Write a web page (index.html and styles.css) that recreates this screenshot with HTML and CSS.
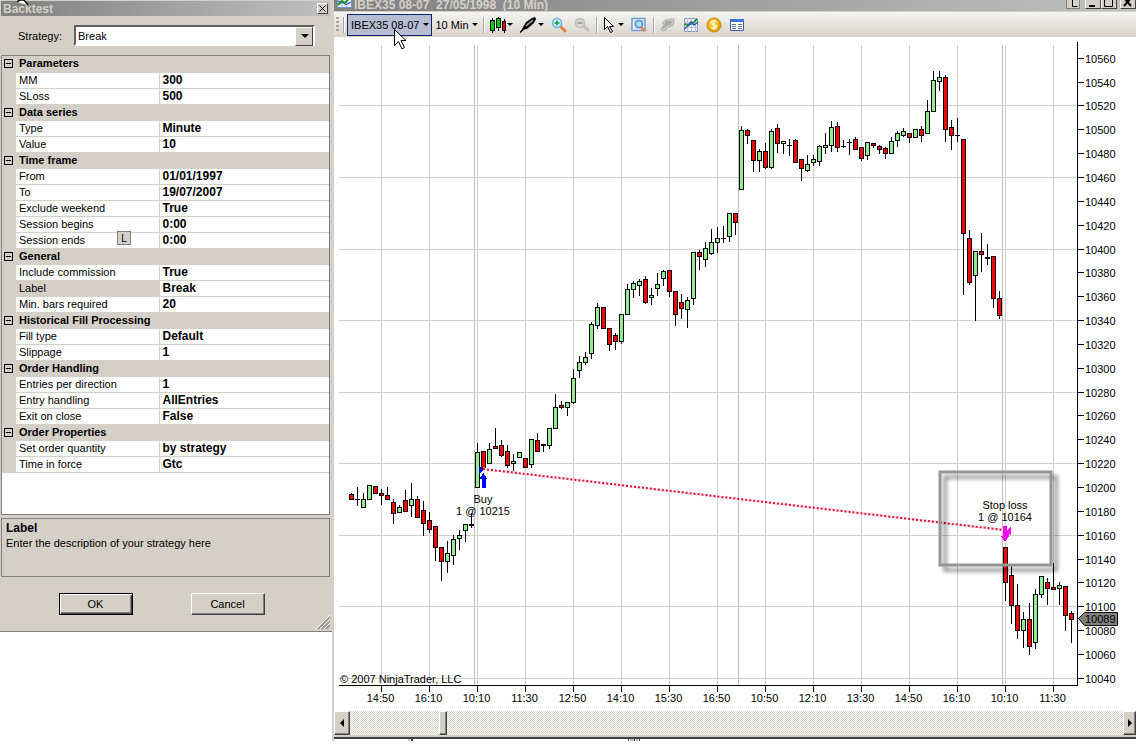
FILE: index.html
```html
<!DOCTYPE html>
<html lang="en">
<head>
    <meta charset="UTF-8">
    <meta name="viewport" content="width=device-width, initial-scale=1.0">
    <title>Backtest - IBEX35 08-07</title>
    <link rel="stylesheet" href="styles.css">
</head>
<body>
    <div class="desktop">
        <form class="dialog" onsubmit="event.preventDefault();">
            <div class="dialog-title">
                <span>Backtest</span>
                <button type="button" class="close-button" aria-label="Close">
                    <svg width="7" height="7" viewBox="0 0 7 7"><path d="M0.5 0.5L6.5 6.5M6.5 0.5L0.5 6.5" stroke="#000"/></svg>
                </button>
            </div>
            <div class="strategy">
                <label for="strategy">Strategy:</label>
                <div class="select-box">
                    <select id="strategy"><option>Break</option></select>
                </div>
            </div>
            <div class="property-grid">
                <table id="properties">
                    <colgroup><col class="col-toggle"><col class="col-name"><col></colgroup>
                    <tbody></tbody>
                </table>
                <button type="button" class="l-badge">L</button>
            </div>
            <div class="help">
                <h2>Label</h2>
                <p>Enter the description of your strategy here</p>
            </div>
            <div class="dialog-buttons">
                <button type="submit" class="button default">OK</button>
                <button type="button" class="button">Cancel</button>
            </div>
            <svg class="resize-grip" width="14" height="14" viewBox="0 0 14 14"><path d="M0 14L14 0M4 14L14 4M8 14L14 8" stroke="#fff"/><path d="M1.5 14L14 1.5M2.5 14L14 2.5M5.5 14L14 5.5M6.5 14L14 6.5M9.5 14L14 9.5M10.5 14L14 10.5" stroke="#808080"/></svg>
        </form>

        <main class="chart-window">
            <div class="window-title">
                <svg class="title-icon" width="15" height="14" viewBox="0 0 15 14"><path d="M0.5 0.5h14v13h-14z" fill="#e8eefa" stroke="#7a94cc"/><path d="M1 5h13M1 9h13M5 1v12M10 1v12" stroke="#a9b8dd"/><path d="M1 11l4-4 3 2 6-7" fill="none" stroke="#1c9a1c" stroke-width="2"/><path d="M1 7l4 1 4 3 5-3" fill="none" stroke="#2648b8"/></svg>
                <span class="window-name">IBEX35 08-07&nbsp; 27/05/1998&nbsp; (10 Min)</span>
                <button type="button" class="link-button" aria-label="Link"><svg width="14" height="14"><path d="M5.5 2v8.500h5" fill="none" stroke="#000" stroke-width="1"/></svg></button>
                <button type="button" class="window-button" aria-label="Minimize"><svg width="14" height="14"><path d="M3 9h6v2h-6z"/></svg></button>
                <button type="button" class="window-button joined" aria-label="Maximize"><svg width="14" height="14"><path d="M2.500 3v7.500h8v-7.500" fill="none" stroke="#000"/></svg></button>
                <button type="button" class="window-button" aria-label="Close"><svg width="14" height="14"><path d="M3 2l7 8M10 2l-7 8" stroke="#000" stroke-width="2"/></svg></button>
            </div>

            <div class="toolbar">
                <span class="grip"></span>
                <span class="separator"></span>
                <button type="button" class="tool text active">IBEX35 08-07<span class="arrow"></span></button>
                <button type="button" class="tool text">10 Min<span class="arrow"></span></button>
                <span class="separator"></span>
                <button type="button" class="tool" aria-label="Chart style">
                    <svg width="16" height="16" viewBox="0 0 16 16" shape-rendering="crispEdges"><path d="M2 1h1v15h-1zM8 0h1v14h-1zM14 2h1v14h-1z"/><g stroke="#000"><path d="M0.500 3.500h4v10h-4z" fill="#00d000"/><path d="M6.500 1.500h4v9h-4z" fill="#00d000"/><path d="M12.500 4.500h3v9h-3z" fill="#f00000"/></g></svg>
                    <span class="arrow"></span>
                </button>
                <button type="button" class="tool" aria-label="Drawing tools">
                    <svg width="17" height="16" viewBox="0 0 17 16"><path d="M2 12L6 5l6-4 3-1 1 2-2 4-7 6-5 1z"/><path d="M6 9l7-6" stroke="#aaa" stroke-width="1.500"/><path d="M0 15.500l5-5" stroke="#000" stroke-width="1.500"/></svg>
                    <span class="arrow"></span>
                </button>
                <button type="button" class="tool" aria-label="Zoom in">
                    <svg width="16" height="16" viewBox="0 0 16 16"><path d="M9 9l5 5" stroke="#e5823c" stroke-width="3" stroke-linecap="round"/><circle cx="6" cy="6" r="4.500" fill="#cdeefa" stroke="#66b7df" stroke-width="1.500"/><path d="M3.500 6h5M6 3.500v5" stroke="#159a45" stroke-width="1.500"/></svg>
                </button>
                <button type="button" class="tool" aria-label="Zoom out" disabled>
                    <svg width="16" height="16" viewBox="0 0 16 16"><path d="M9 9l5 4" stroke="#bdbdbd" stroke-width="3" stroke-linecap="round"/><circle cx="6" cy="6" r="4.500" fill="#d8d8d6" stroke="#bcbcba" stroke-width="1.500"/><path d="M3.500 6h5" stroke="#929292" stroke-width="1.500"/></svg>
                </button>
                <span class="separator"></span>
                <button type="button" class="tool" aria-label="Pointer">
                    <svg width="14" height="16" viewBox="0 0 14 16"><path d="M1.500 0.500v12l3-3 3 6 2-1-3-5h4z" fill="#fff" stroke="#000"/></svg>
                    <span class="arrow"></span>
                </button>
                <button type="button" class="tool" aria-label="Data box">
                    <svg width="16" height="16" viewBox="0 0 16 16"><path d="M1 1.500h13v12H1z" fill="#f4f9ff" stroke="#6d9bd6" stroke-width="1.500"/><path d="M3 4h10M3 6h10M3 8h10M3 11h6" stroke="#91b7e4"/><path d="M10 10l4 4" stroke="#ee8247" stroke-width="3"/><circle cx="8" cy="7" r="3.500" fill="#a6e1f4" stroke="#5793bd" stroke-width="1.500"/></svg>
                </button>
                <span class="separator"></span>
                <button type="button" class="tool" aria-label="Chart trader" disabled>
                    <svg width="16" height="16" viewBox="0 0 16 16"><path d="M5 3l5-1 4 0v4l-2 3-4 1-2 3-3 1-2-2 2-3 2-1-3-2z" fill="#c5c5c3" stroke="#b3b3b1"/><path d="M5 5h7M5 7h6M3 11l4-3" stroke="#929290"/></svg>
                </button>
                <button type="button" class="tool" aria-label="Indicators">
                    <svg width="16" height="16" viewBox="0 0 16 16"><path d="M1.500 1.500h13v13h-13z" fill="#eef0fa" stroke="#8a92bd"/><path d="M4.500 1v14M8.500 1v14M12.500 1v14M1 5.500h14M1 10.500h14" stroke="#bbc0dc"/><path d="M1 7l4 1 5-2 4-4" fill="none" stroke="#21a12b" stroke-width="2"/><path d="M1 12l4-3 3-4 3 3 4-3" fill="none" stroke="#2f5bac" stroke-width="1.500"/></svg>
                </button>
                <button type="button" class="tool" aria-label="Strategies">
                    <svg width="16" height="16" viewBox="0 0 16 16"><circle cx="8" cy="8" r="7" fill="#e7a500" stroke="#c88700"/><circle cx="7.500" cy="7" r="5" fill="#f8c42a"/><path d="M10.500 5c-1-1.500-5-1.300-5 1 0 2 5 1.500 5 3.700 0 2-4 2.300-5.300.5M8 3v10" fill="none" stroke="#fff8d7" stroke-width="1.500"/></svg>
                </button>
                <button type="button" class="tool" aria-label="Properties">
                    <svg width="16" height="16" viewBox="0 0 16 16"><path d="M1.500 2.500h13v11h-13z" fill="#fff" stroke="#3c5fa8"/><path d="M1 2h14v3H1z" fill="#3f73d3"/><path d="M3 7.500h4M3 9.500h4M3 11.500h4M9 7.500h4M9 9.500h4M9 11.500h4" stroke="#64749a"/></svg>
                </button>
            </div>

            <svg id="chart" class="chart" viewBox="334 37 802 674" role="img" aria-label="IBEX35 10 minute candlestick chart">
                <g id="grid"></g>
                <g id="candles"></g>
                <path class="axis" d="M339 685.500H1078M1077.500 42V686"/>
                <g id="labels"></g>
                <text x="340" y="683">© 2007 NinjaTrader, LLC</text>

                <path class="trade-halo" d="M483 469L1004 530"/>
                <path class="trade-line" d="M483 469L1004 530"/>
                <path class="buy" d="M479 465l4 5-4 4zM483.500 473l4 6h-2v9h-4v-9h-2z"/>
                <path class="sell" d="M1003 526h4v4l4-4v9l-2-1v2l-4 6-4-6h2z"/>
                <text class="middle" x="483" y="503">Buy</text>
                <text class="middle" x="483" y="515">1 @ 10215</text>
                <text class="middle" x="1005" y="509">Stop loss</text>
                <text class="middle" x="1005" y="521">1 @ 10164</text>
                <rect class="callout" x="940" y="472" width="111" height="93"/>

                <path class="price-tag" d="M1078.500 618.500l6-6h33v13h-33z"/>
                <text x="1085" y="623">10089</text>
            </svg>

            <div class="scrollbar">
                <button type="button" class="scroll-button" aria-label="Scroll left"><svg width="4" height="8"><path d="M4 0v8L0 4z"/></svg></button>
                <div class="track"><span class="thumb"></span></div>
                <button type="button" class="scroll-button" aria-label="Scroll right"><svg width="4" height="8"><path d="M0 0v8l4-4z"/></svg></button>
            </div>
            <!-- edges of the window underneath -->
            <svg class="window-below" width="232" height="2" viewBox="0 0 232 2"><path d="M0 0h2v2h-2zM222 0h5v2h-5zM228 0h2v2h-2z" fill="#c0c0c0"/><path d="M3 0h2v2h-2zM220 0h1v2h-1zM226 0h1v2h-1zM231 0h1v2h-1z" fill="#404040"/></svg>
        </main>
        <svg class="pointer" width="13" height="22" viewBox="0 0 13 22"><path d="M1.500 0.500v16l4-4 3.500 7.500 2.500-1.500-3.500-7h5z" fill="#fff" stroke="#000"/></svg>
        <svg class="pointer-tail" width="12" height="6" viewBox="0 0 12 6"><path d="M0 2l3-2h4l4 5" fill="#fff" stroke="#000" stroke-width="1.500"/></svg>
    </div>

<script src="chart.js"></script>
</body>
</html>
```
FILE: styles.css
```css
* {
    box-sizing: border-box;
}

body {
    margin: 0;
    background-color: #fff;
    color: #000;
    font-family: "Liberation Sans", Arial, sans-serif;
    font-size: 11px;
}

button, select {
    font: inherit;
    color: inherit;
    margin: 0;
    padding: 0;
}

.desktop {
    position: relative;
    display: flex;
    align-items: flex-start;
    min-height: 100vh;
}

/* Backtest dialog */
.dialog {
    position: relative;
    flex: 0 0 332px;
    padding: 1px 2px 16px 1px;
    background-color: #d4d0c8;
    border-bottom: 1px solid #808080;
}

.dialog-title {
    display: flex;
    align-items: center;
    justify-content: space-between;
    height: 15px;
    padding: 0 2px;
    background: linear-gradient(90deg, #808080, #c0c0c0);
    color: #d4d0c8;
    font-size: 12px;
    font-weight: bold;
}

.close-button {
    display: flex;
    align-items: center;
    justify-content: center;
    width: 11px;
    height: 11px;
    background-color: #d4d0c8;
    border: 1px solid;
    border-color: #fff #404040 #404040 #fff;
}

.strategy {
    display: flex;
    align-items: center;
    gap: 12px;
    padding: 9px 15px 9px 17px;
}

.strategy label {
    flex: 0 0 42px;
}

.select-box {
    position: relative;
    flex: 1;
    height: 21px;
    background-color: #fff;
    border: 2px solid;
    border-color: #606060 #fff #fff #606060;
}

.select-box select {
    width: 100%;
    height: 17px;
    padding-left: 2px;
    border: 0;
    background: transparent;
    appearance: none;
}

/* drop-down arrow */
.select-box::before {
    content: "";
    position: absolute;
    right: 0;
    top: 0;
    width: 16px;
    height: 17px;
    background-color: #d4d0c8;
    border: 1px solid;
    border-color: #fff #404040 #404040 #fff;
    pointer-events: none;
}

.select-box::after {
    content: "";
    position: absolute;
    right: 4px;
    top: 7px;
    border: 4px solid transparent;
    border-top-color: #000;
    border-bottom: 0;
    pointer-events: none;
}

.property-grid {
    position: relative;
    height: 460px;
    background-color: #fff;
    border: 1px solid #808080;
}

table {
    width: 100%;
    table-layout: fixed;
    border-collapse: collapse;
    border-spacing: 0;
}

.col-toggle {
    width: 14px;
}

.col-name {
    width: 143px;
}

tr {
    height: 16px;
}

th, td {
    height: 16px;
    padding: 0 0 0 3px;
    border-bottom: 1px solid #d4d0c8;
    font-weight: normal;
    line-height: 15px;
    text-align: left;
    white-space: nowrap;
}

.category th, .category td, .gutter, .selected th {
    background-color: #d4d0c8;
}

.category th, td.value {
    font-weight: bold;
}

td.value {
    border-left: 1px solid #d4d0c8;
    font-size: 12px;
}

td.gutter {
    padding: 0 0 0 2px;
}

.toggle {
    display: block;
    width: 9px;
    height: 9px;
    background: linear-gradient(#000, #000) center / 5px 1px no-repeat;
    border: 1px solid #000;
}

.l-badge {
    position: absolute;
    left: 115px;
    top: 175px;
    width: 14px;
    height: 14px;
    line-height: 11px;
    background-color: #d4d0c8;
    border: 1px solid #808080;
    font-size: 10px;
}

.help {
    height: 59px;
    margin-top: 3px;
    padding: 2px 4px;
    border: 1px solid #808080;
}

.help h2 {
    margin: 0;
    font-size: 12px;
    line-height: 15px;
}

.help p {
    margin: 0;
    line-height: 14px;
}

.dialog-buttons {
    display: flex;
    justify-content: center;
    gap: 58px;
    padding: 16px 8px 0 0;
}

.button {
    width: 74px;
    height: 22px;
    background-color: #d4d0c8;
    border: 1px solid;
    border-color: #fff #404040 #404040 #fff;
    box-shadow: inset -1px -1px #808080;
}

.button.default {
    border-color: #000;
    box-shadow: inset 1px 1px #fff, inset -1px -1px #404040, inset -2px -2px #808080;
}

.resize-grip {
    position: absolute;
    right: 2px;
    bottom: 2px;
}

/* Chart window */
.chart-window {
    flex: 1;
    min-width: 0;
    border-left: 2px solid #d4d0c8;
}

.window-title {
    display: flex;
    align-items: flex-end;
    height: 12px;
    padding-left: 3px;
    overflow: hidden;
    background: linear-gradient(90deg, #808080, #c0c0c0);
    border-bottom: 1px solid #d4d0c8;
    color: #d4d0c8;
    font-size: 12px;
    font-weight: bold;
}

.title-icon {
    flex: none;
    margin: 0 2px 3px 0;
}

.window-name {
    flex: 1;
    line-height: 11px;
    white-space: nowrap;
}

.link-button, .window-button {
    flex: none;
    width: 14px;
    height: 14px;
    margin: 0 5px 2px 0;
    overflow: hidden;
    background-color: #d4d0c8;
    border: 1px solid #808080;
}

.window-button {
    width: 16px;
    margin-right: 0;
    border-color: #fff #404040 #404040 #fff;
}

.window-button.joined {
    margin-right: 3px;
}

.toolbar {
    display: flex;
    align-items: center;
    height: 25px;
    padding: 0 2px;
    background: linear-gradient(#f5f4f2, #d8d4cc);
}

.grip {
    width: 3px;
    height: 15px;
    margin-right: 2px;
    background: repeating-linear-gradient(#a8a49c 0 2px, transparent 2px 4px);
}

.separator {
    width: 2px;
    height: 16px;
    margin: 0 2px;
    background-color: #a6a6a6;
    border-right: 1px solid #fff;
}

.tool {
    display: flex;
    align-items: center;
    height: 22px;
    padding: 0 3px 0 2px;
    background: none;
    border: 1px solid transparent;
    white-space: nowrap;
}

.tool.text {
    padding: 0 2px 0 3px;
}

.tool.active {
    background-color: #b6bdd2;
    border-color: #0a246a;
}

.arrow {
    margin-left: 3px;
    border: 3px solid transparent;
    border-top-color: #000;
    border-bottom: 0;
}

svg + .arrow {
    margin-left: 1px;
}

.chart {
    display: block;
    width: 100%;
    height: auto;
}

.chart text {
    font-size: 11px;
}

.chart .middle {
    text-anchor: middle;
}

.grid-line, .session-line, .axis, .wick, .up, .down, .buy, .sell {
    shape-rendering: crispEdges;
}

.grid-line {
    stroke: #d4d0c8;
}

.session-line {
    stroke: #c0c0c0;
}

.axis, .wick {
    stroke: #000;
}

.up, .down {
    fill: #90ee90;
    stroke: #000;
}

.down {
    fill: #f00;
}

.trade-halo {
    stroke: #fbe6ea;
    stroke-width: 3;
}

.trade-line {
    stroke: #dc143c;
    stroke-width: 2;
    stroke-dasharray: 2 2;
}

.buy {
    fill: #00f;
}

.sell {
    fill: #f0f;
}

.callout {
    fill: none;
    stroke: #969696;
    stroke-width: 3;
    filter: drop-shadow(5px 5px 2px rgba(0, 0, 0, 0.5));
}

.price-tag {
    fill: #808080;
    stroke: #000;
}

.scrollbar {
    display: flex;
    height: 28px;
    border-bottom: 2px solid #404040;
    box-shadow: inset 0 -2px #d4d0c8;
    padding-bottom: 2px;
}

.track {
    flex: 1;
    background: repeating-conic-gradient(#d4d0c8 0 25%, #fff 0 50%) 0 0 / 2px 2px;
}

.scroll-button, .thumb {
    background-color: #d4d0c8;
    border: 1px solid;
    border-color: #fff #404040 #404040 #fff;
    box-shadow: inset -1px -1px #808080;
}

.scroll-button {
    display: flex;
    flex: 0 0 16px;
    align-items: center;
    justify-content: center;
}

.scroll-button:last-child {
    flex-basis: 13px;
}

.thumb {
    display: block;
    width: 8px;
    height: 24px;
    margin-left: 89px;
}

.window-below {
    display: block;
    margin: 0 0 0 74px;
}

/* Mouse pointers over the windows */
.pointer {
    position: absolute;
    left: 393px;
    top: 29px;
}

.pointer-tail {
    position: absolute;
    left: 17px;
    top: 0;
}
```
FILE: chart.js
```js
const properties = [
    ["Parameters", [["MM", "300"], ["SLoss", "500"]]],
    ["Data series", [["Type", "Minute"], ["Value", "10"]]],
    ["Time frame", [["From", "01/01/1997"], ["To", "19/07/2007"], ["Exclude weekend", "True"], ["Session begins", "0:00"], ["Session ends", "0:00"]]],
    ["General", [["Include commission", "True"], ["Label", "Break"], ["Min. bars required", "20"]]],
    ["Historical Fill Processing", [["Fill type", "Default"], ["Slippage", "1"]]],
    ["Order Handling", [["Entries per direction", "1"], ["Entry handling", "AllEntries"], ["Exit on close", "False"]]],
    ["Order Properties", [["Set order quantity", "by strategy"], ["Time in force", "Gtc"]]]
];

let rows = "";
for (const [category, items] of properties) {
    rows += `<tr class="category"><td class="gutter"><button type="button" class="toggle" aria-label="Collapse ${category}"></button></td><th colspan="2">${category}</th></tr>`;
    for (const [name, value] of items) {
        rows += `<tr class="${name === "Label" ? "selected" : ""}"><td class="gutter"></td><th scope="row">${name}</th><td class="value">${value}</td></tr>`;
    }
}
document.querySelector("#properties tbody").innerHTML = rows;

// Each bar: colour (g up, r down, d doji), body top, body bottom, high, low
const bars = `r 494 500 493 500|d 499 500 487 506|g 499 508 493 508|g 485 500 485 500|r 486 494 486 494|r 493 496 489 505|r 495 500 487 500
r 502 514 499 524|g 507 513 505 513|r 500 512 490 512|g 499 506 483 517|r 499 518 496 518|r 510 524 501 536|r 520 530 512 533
r 526 548 526 561|r 547 562 547 581|g 553 562 541 573|g 539 556 535 565|g 535 539 530 550|g 524 531 524 542|d 524 526 513 528
g 452 488 443 488|r 451 469 451 469|g 449 464 443 464|r 446 449 428 449|r 445 456 440 457|r 451 466 445 468|g 461 464 454 472
g 452 458 452 458|r 458 468 458 468|g 439 465 439 468|r 440 452 433 452|d 444 446 444 452|g 428 446 428 449|g 407 429 394 429
r 405 408 401 409|g 402 408 402 416|g 378 403 369 404|g 362 371 356 378|g 357 363 352 365|g 324 354 322 359|g 307 326 303 329
r 307 329 307 329|r 328 345 328 351|r 335 342 333 350|g 314 342 314 344|g 289 315 284 315|g 283 290 281 298|g 281 286 279 296
r 279 303 276 304|g 295 298 288 305|g 284 289 273 296|g 271 279 270 286|r 270 292 270 297|r 291 315 291 326|r 302 309 294 319
g 300 310 297 328|g 252 299 252 305|r 252 257 250 270|g 248 260 242 267|g 242 254 229 255|g 238 243 227 253|d 238 239 226 243
g 213 237 213 242|r 213 223 213 235|g 130 190 126 190|r 130 136 129 144|r 140 161 140 172|g 151 161 149 172|r 151 168 143 169
g 131 168 129 169|r 128 144 124 153|g 141 144 141 154|d 145 146 139 156|r 140 163 139 163|r 159 169 159 181|g 164 171 155 172
g 159 163 155 166|g 146 162 145 166|g 145 148 133 154|g 127 146 121 152|r 126 148 122 152|d 146 147 140 148|d 142 143 139 155
r 139 150 137 150|r 147 159 147 161|g 142 156 142 160|r 143 146 143 148|r 146 150 145 154|r 148 154 147 159|g 141 154 137 154
g 133 141 131 147|g 131 136 128 137|r 133 138 133 143|g 129 138 129 138|r 129 136 126 142|g 111 134 100 134|g 80 112 71 112
g 77 82 71 91|r 77 130 75 142|r 127 136 120 150|d 135 136 118 142|r 139 234 139 295|r 238 283 230 285|g 251 276 251 321
r 251 255 233 272|d 257 259 244 265|r 256 299 256 308|r 298 316 291 319|r 547 583 547 601|r 575 606 565 624|r 605 631 584 639
g 619 631 612 648|r 619 647 603 655|g 594 643 589 649|g 576 595 576 598|r 582 589 578 605|r 587 590 563 590|g 585 589 582 605
r 586 616 586 631|r 613 620 611 643`.split(/[|\n]/);

let candles = "";
bars.forEach((bar, i) => {
    const [type, top, bottom, high, low] = bar.split(" ");
    const x = 351 + i * 6;
    candles += `<path class="wick" d="M${x + 0.5} ${high}V${low}"/>`;
    if (type === "d") {
        candles += `<path d="M${x - 2} ${top}h5V${bottom}h-5z"/>`;
    } else {
        candles += `<rect class="${type === "g" ? "up" : "down"}" x="${x - 1.5}" y="${+top + 0.5}" width="4" height="${bottom - top - 1}"/>`;
    }
});
document.getElementById("candles").innerHTML = candles;

let grid = "";
let labels = "";

// Price axis, a grid line at every third price
for (let i = 0; i <= 26; i++) {
    const y = Math.floor(58.3 + i * 23.846) + 0.5;
    if (i % 3 === 2) {
        grid += `<path class="grid-line" d="M339 ${y}H1077"/>`;
    }
    labels += `<path class="axis" d="M1078 ${y}h6"/><text x="1085" y="${y + 4}">${10560 - i * 20}</text>`;
}

// Time axis
const times = ["14:50", "16:10", "10:10", "11:30", "12:50", "14:10", "15:30", "16:50", "10:50", "12:10", "13:30", "14:50", "16:10", "10:10", "11:30"];
times.forEach((time, i) => {
    const x = 381.5 + i * 48;
    grid += `<path class="grid-line" d="M${x} 45V685"/>`;
    labels += `<path class="axis" d="M${x} 686v6"/><text class="middle" x="${x - 1}" y="702">${time}</text>`;
});

for (const x of [474.5, 738.5, 1002.5]) {
    grid += `<path class="session-line" d="M${x} 45V685"/>`;
}

document.getElementById("grid").innerHTML = grid;
document.getElementById("labels").innerHTML = labels;
```
